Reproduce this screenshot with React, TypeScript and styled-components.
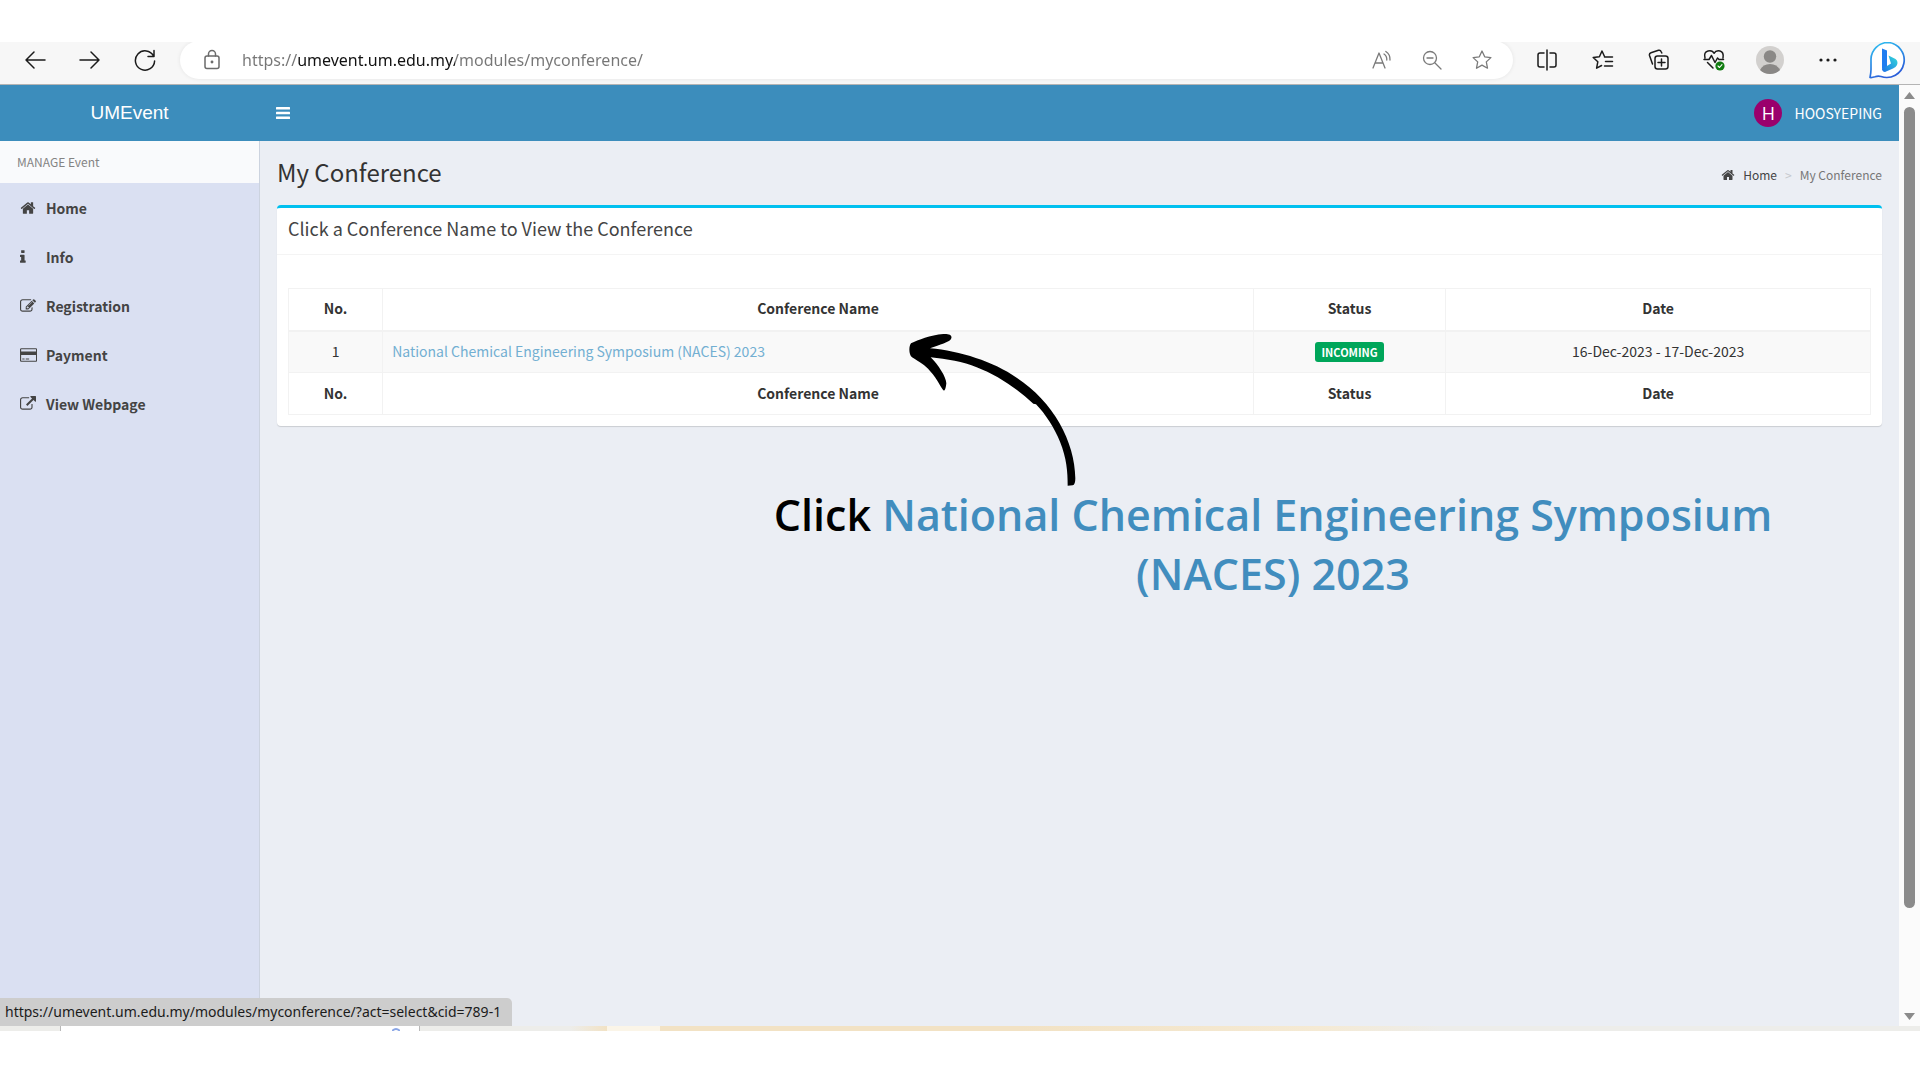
import React from "react";
import styled, { createGlobalStyle } from "styled-components";

const sans = `"Noto Sans CJK SC", "Noto Sans", sans-serif`;
const ui = `"Noto Sans", "Open Sans", sans-serif`;

const GlobalStyle = createGlobalStyle`
  * { box-sizing: border-box; }
  body { margin: 0; background: #fff; color: #333; font-family: ${sans}; font-size: 14px; line-height: 20px; }
  button { border: 0; background: none; padding: 0; font: inherit; color: inherit; cursor: pointer; }
  a { color: inherit; text-decoration: none; }
`;

const Frame = styled.div`
  min-height: 100vh;
  padding: 42px 0 49px;
  display: flex;
  flex-direction: column;
`;

/* ---------- browser bar ---------- */
const BrowserBar = styled.header`
  display: flex;
  align-items: center;
  height: 43px;
  padding: 0 1px 6px 7px;
  overflow: hidden;
  background: #f7f7f7;
  border-bottom: 1px solid #b4b4b4;
`;

const BarButton = styled.button<{ $width: number; $tone?: string }>`
  display: flex;
  align-items: center;
  justify-content: center;
  flex: none;
  width: ${(p) => p.$width}px;
  height: 36px;
  color: ${(p) => p.$tone ?? "#1b1b1b"};
`;

const AddressBar = styled.form`
  flex: 1;
  display: flex;
  align-items: center;
  height: 38px;
  margin: 0 6px 0 8px;
  padding: 0 6px 0 22px;
  border-radius: 19px;
  background: #fff;
  box-shadow: 0 0 4px rgba(0, 0, 0, 0.08);
`;

const AddressInput = styled.input`
  flex: 1;
  min-width: 0;
  margin-left: 20px;
  padding: 0;
  border: 0;
  outline: 0;
  font: 16px/24px ${ui};
  color: #767676;
  -webkit-text-fill-color: transparent;
  background: linear-gradient(to right, #767676 56px, #111 56px, #111 213px, #767676 213px);
  background-clip: text;
  -webkit-background-clip: text;
`;

/* ---------- page ---------- */
const Viewport = styled.div`
  position: relative;
  flex: 1;
  display: flex;
`;

const Page = styled.div`
  flex: 1;
  display: flex;
  flex-direction: column;
`;

const TopBar = styled.div`
  display: flex;
  align-items: center;
  height: 56px;
  background: #3c8dbc;
  color: #fff;
`;

const Brand = styled.a`
  width: 259px;
  text-align: center;
  font: 19px/56px "Liberation Sans", Arial, sans-serif;
`;

const MenuToggle = styled.button`
  display: flex;
  margin-left: 17px;
`;

const UserLink = styled.button`
  display: flex;
  align-items: center;
  gap: 12px;
  margin-left: auto;
  margin-right: 17px;
  font-size: 14px;
`;

const UserInitial = styled.span`
  width: 28px;
  height: 28px;
  border-radius: 50%;
  background: #9a006c;
  text-align: center;
  font: 18px/28px "Open Sans", sans-serif;
`;

const Columns = styled.div`
  flex: 1;
  display: flex;
`;

const Sidebar = styled.nav`
  width: 260px;
  flex: none;
  background: #dae0f2;
  border-right: 1px solid #ccd3df;
`;

const SidebarTitle = styled.div`
  height: 42px;
  padding-left: 17px;
  background: #f9fafc;
  color: #848484;
  font-size: 12px;
  line-height: 42px;
`;

const SidebarLink = styled.a`
  display: grid;
  grid-template-columns: 26px 1fr;
  align-items: center;
  height: 49px;
  padding-left: 20px;
  color: #444;
  font-weight: 700;
  font-size: 14px;
`;

const Content = styled.main`
  position: relative;
  flex: 1;
  padding: 0 17px;
  background: #ebeef4;
`;

const ContentHeader = styled.div`
  display: flex;
  align-items: center;
  justify-content: space-between;
  height: 64px;
  padding-bottom: 2px;
`;

const Title = styled.h1`
  margin: 0;
  font-size: 24px;
  font-weight: 400;
  line-height: 32px;
`;

const Crumbs = styled.ol`
  display: flex;
  align-items: center;
  gap: 8px;
  margin: 6px 0 0;
  padding: 0;
  list-style: none;
  font-size: 12px;
  color: #777;
`;

const CrumbLink = styled.a`
  display: flex;
  align-items: center;
  gap: 8px;
  color: #444;
`;

const Separator = styled.li`
  color: #c6c9ce;
`;

const Card = styled.section`
  border-top: 3px solid #00c0ef;
  border-radius: 4px;
  background: #fff;
  box-shadow: 0 1px 1px rgba(0, 0, 0, 0.14);
`;

const CardTitle = styled.h2`
  margin: 0;
  padding: 0 11px 6px;
  border-bottom: 1px solid #f4f4f4;
  color: #444;
  font-size: 18px;
  font-weight: 400;
  line-height: 40px;
`;

const CardBody = styled.div`
  padding: 33px 11px 11px;
`;

const Table = styled.table`
  width: 100%;
  table-layout: fixed;
  border-collapse: collapse;
  text-align: center;

  th, td { height: 42px; padding: 0 9px 2px; border: 1px solid #f2f2f2; line-height: 20px; }
  thead th { border-bottom-width: 2px; }
  tbody tr { background: #f9f9f9; }
`;

const Col = styled.col<{ $share: number }>`
  width: ${(p) => p.$share}%;
`;

const NameCell = styled.td`
  text-align: left;
`;

const ConferenceLink = styled.a`
  color: #72afd2;
`;

const Badge = styled.span`
  display: inline-block;
  padding: 0 6px;
  border-radius: 3px;
  background: #00a65a;
  color: #fff;
  font-size: 11px;
  font-weight: 700;
  line-height: 20px;
  vertical-align: middle;
`;

/* ---------- annotation laid over the page ---------- */
const Note = styled.div`
  position: absolute;
  top: 184px;
  left: 480px;
  width: 1066px;
`;

const NoteArrow = styled.svg`
  display: block;
  margin-left: 160px;
`;

const NoteText = styled.p`
  margin: -10px 0 0;
  color: #418dbe;
  font: 600 43px/59px "Open Sans", "Noto Sans", sans-serif;
  text-align: center;
`;

const NoteLead = styled.span`
  color: #000;
`;

/* ---------- scroll bar, status bubble, task bar edge ---------- */
const ScrollTrack = styled.div`
  display: flex;
  flex-direction: column;
  align-items: center;
  justify-content: space-between;
  width: 21px;
  padding: 6px 0;
  background: #fbfbfb;
`;

const ScrollThumb = styled.div`
  flex: 0 1 801px;
  width: 11px;
  margin: 8px 0 auto;
  border-radius: 6px;
  background: #8b8b8b;
`;

const StatusBubble = styled.div`
  position: absolute;
  left: 0;
  bottom: 0;
  height: 28px;
  padding: 0 11px 0 5px;
  border-radius: 0 5px 0 0;
  background: #cdcdcd;
  color: #1b1b1b;
  font: 14px/28px ${ui};
`;

const TaskEdge = styled.div`
  display: flex;
  height: 5px;
  overflow: hidden;
  background: #ededea;
`;

const TaskTab = styled.div`
  width: 360px;
  margin-left: 60px;
  padding-left: 331px;
  border: solid #b9b9b9;
  border-width: 0 1px;
  background: #fff;

  svg { display: block; }
`;

const TaskGlow = styled.div`
  flex: 1;
  background: linear-gradient(to right, #ededea 0 10%, #f2e2c4 12.5%, #fbf5e8 12.5% 16%, #f2e2c4 16% 40%, #f5ead4 60%, #ededea 68%);
`;

const Svg = (p: React.SVGProps<SVGSVGElement>) => (
  <svg fill="none" stroke="currentColor" strokeWidth={1.5} strokeLinecap="round" strokeLinejoin="round" aria-hidden {...p} />
);

const Glyph = ({ d, w = 1792, size = 16 }: { d: string; w?: number; size?: number }) => (
  <svg width={(size * w) / 1792} height={size} viewBox={`0 0 ${w} 1792`} fill="currentColor" aria-hidden>
    <path d={d} />
  </svg>
);

const homePath =
  "M1472 992v480q0 26-19 45t-45 19h-384v-384h-256v384h-384q-26 0-45-19t-19-45v-480q0-1 .5-3t.5-3l575-474 575 474q1 2 1 6zm223-69l-62 74q-8 9-21 11h-3q-13 0-21-7l-692-577-692 577q-12 8-24 7-13-2-21-11l-62-74q-8-10-7-23.5t11-21.5l719-599q32-26 76-26t76 26l244 204v-195q0-14 9-23t23-9h192q14 0 23 9t9 23v408l219 182q10 8 11 21.5t-7 23.5z";

const menu = [
  { label: "Home", w: 1792, d: homePath },
  {
    label: "Info",
    w: 640,
    d: "M640 1344v128q0 26-19 45t-45 19h-512q-26 0-45-19t-19-45v-128q0-26 19-45t45-19h64v-384h-64q-26 0-45-19t-19-45v-128q0-26 19-45t45-19h384q26 0 45 19t19 45v576h64q26 0 45 19t19 45zm-128-1152v192q0 26-19 45t-45 19h-256q-26 0-45-19t-19-45v-192q0-26 19-45t45-19h256q26 0 45 19t19 45z",
  },
  {
    label: "Registration",
    w: 1792,
    d: "M888 1184l116-116-152-152-116 116v56h96v96h56zm440-720q-16-16-33 1l-350 350q-17 17-1 33t33-1l350-350q17-17 1-33zm80 594v190q0 119-84.5 203.5t-203.5 84.5h-832q-119 0-203.5-84.5t-84.5-203.5v-832q0-119 84.5-203.5t203.5-84.5h832q63 0 117 25 15 7 18 23 3 17-9 29l-49 49q-14 14-32 8-23-6-45-6h-832q-66 0-113 47t-47 113v832q0 66 47 113t113 47h832q66 0 113-47t47-113v-126q0-13 9-22l64-64q15-15 35-7t20 29zm-96-738l288 288-672 672h-288v-288zm444 132l-92 92-288-288 92-92q28-28 68-28t68 28l152 152q28 28 28 68t-28 68z",
  },
  {
    label: "Payment",
    w: 1920,
    d: "M1760 128q66 0 113 47t47 113v1216q0 66-47 113t-113 47h-1600q-66 0-113-47t-47-113v-1216q0-66 47-113t113-47h1600zm-1600 128q-13 0-22.5 9.5t-9.5 22.5v224h1664v-224q0-13-9.5-22.5t-22.5-9.5h-1600zm1600 1280q13 0 22.5-9.5t9.5-22.5v-608h-1664v608q0 13 9.5 22.5t22.5 9.5h1600zm-1504-128v-128h256v128h-256zm384 0v-128h384v128h-384z",
  },
  {
    label: "View Webpage",
    w: 1792,
    d: "M1408 928v320q0 119-84.5 203.5t-203.5 84.5h-832q-119 0-203.5-84.5t-84.5-203.5v-832q0-119 84.5-203.5t203.5-84.5h704q14 0 23 9t9 23v64q0 14-9 23t-23 9h-704q-66 0-113 47t-47 113v832q0 66 47 113t113 47h832q66 0 113-47t47-113v-320q0-14 9-23t23-9h64q14 0 23 9t9 23zm384-864v512q0 26-19 45t-45 19-45-19l-176-176-652 652q-10 10-23 10t-23-10l-114-114q-10-10-10-23t10-23l652-652-176-176q-19-19-19-45t19-45 45-19h512q26 0 45 19t19 45z",
  },
];

const columns = ["No.", "Conference Name", "Status", "Date"];
const shares = [5.95, 55.05, 12.15, 26.85];

const starPath = "M11 2l2.7 5.8 6.2.8-4.6 4.3 1.2 6.3L11 16.1l-5.5 3.1 1.2-6.3L2.1 8.6l6.2-.8z";

const HeadRow = () => (
  <tr>
    {columns.map((name) => (
      <th key={name} scope="col">{name}</th>
    ))}
  </tr>
);

const Toolbar = () => (
  <BrowserBar>
    <BarButton $width={55} aria-label="Back">
      <Svg width={22} height={20} viewBox="0 0 22 20"><path d="M21 10H2M10 2l-8 8 8 8" /></Svg>
    </BarButton>
    <BarButton $width={55} aria-label="Forward">
      <Svg width={22} height={20} viewBox="0 0 22 20"><path d="M1 10h19M12 2l8 8-8 8" /></Svg>
    </BarButton>
    <BarButton $width={55} aria-label="Refresh">
      <Svg width={22} height={22} viewBox="0 0 22 22"><path d="M19.500 7A9.600 9.600 0 1 0 20.600 12M20 1.500V7.500h-6" /></Svg>
    </BarButton>
    <AddressBar>
      <Svg width={20} height={22} viewBox="0 0 20 22" color="#6b6b6b">
        <rect x="3" y="7" width="14" height="12.5" rx="2" />
        <path d="M6.5 7V5a3.5 3.5 0 0 1 7 0v2" />
        <circle cx="10" cy="13" r="0.7" fill="currentColor" />
      </Svg>
      <AddressInput aria-label="Address" defaultValue="https://umevent.um.edu.my/modules/myconference/" />
      <BarButton $width={50} $tone="#7a7a7a" type="button" aria-label="Read aloud">
        <Svg width={22} height={22} viewBox="0 0 22 22" strokeWidth={1.3}>
          <path d="M2 19L8 4l6 15M4 14h8M13 5q3 2 2.8 6M14.8 2.5q4.600 3 4.200 8.500" />
        </Svg>
      </BarButton>
      <BarButton $width={50} $tone="#7a7a7a" type="button" aria-label="Zoom out">
        <Svg width={22} height={22} viewBox="0 0 22 22" strokeWidth={1.3}>
          <circle cx="9" cy="9" r="6.500" /><path d="M6 9h6M14 14l6 6" />
        </Svg>
      </BarButton>
      <BarButton $width={50} $tone="#7a7a7a" type="button" aria-label="Add to favourites">
        <Svg width={22} height={22} viewBox="0 0 22 22" strokeWidth={1.3}><path d={starPath} /></Svg>
      </BarButton>
    </AddressBar>
    <BarButton $width={56} aria-label="Split screen">
      <Svg width={22} height={22} viewBox="0 0 22 22">
        <path d="M8 4H4a2 2 0 0 0-2 2v10a2 2 0 0 0 2 2h4M14 4h4a2 2 0 0 1 2 2v10a2 2 0 0 1-2 2h-4M11 1v20" />
      </Svg>
    </BarButton>
    <BarButton $width={56} aria-label="Favourites">
      <Svg width={22} height={22} viewBox="0 0 22 22">
        <path d="M12.500 7.500L10 2 7.400 7.700l-6.200.8 4.600 4.300-1.200 6.400 5-2.700M12.500 8h8M13.500 12.500h7M12.500 17h8" />
      </Svg>
    </BarButton>
    <BarButton $width={55} aria-label="Collections">
      <Svg width={22} height={22} viewBox="0 0 22 22">
        <rect x="7" y="7" width="13" height="13" rx="2.500" />
        <path d="M13.500 10v7M10 13.500h7M4.500 15L1.500 6.500q-.5-2 1.500-2.700l7.500-2.500q2-.5 2.700 1.400L13.800 4" />
      </Svg>
    </BarButton>
    <BarButton $width={55} aria-label="Browser essentials">
      <Svg width={22} height={22} viewBox="0 0 22 22">
        <path d="M2 9Q.5 3 5 2t6 2.300Q13 1 17 2t3 7M1 10.500h5l2.500-4 3.500 7 2.500-4.500 1.500 1.500h4.500M4.500 13.500l5.500 5.500" />
        <circle cx="17" cy="17" r="4.600" fill="#107c10" stroke="none" />
        <path d="M15 17l1.500 1.500 2.500-2.800" stroke="#fff" strokeWidth={1.100} />
      </Svg>
    </BarButton>
    <BarButton $width={58} aria-label="Profile">
      <Svg width={28} height={28} viewBox="0 0 28 28" stroke="none">
        <circle cx="14" cy="14" r="14" fill="#d2d0ce" />
        <circle cx="14" cy="10.500" r="6.200" fill="#8a8886" />
        <path d="M4 24q3-6 10-6t10 6q-4 4-10 4t-10-4z" fill="#8a8886" />
      </Svg>
    </BarButton>
    <BarButton $width={58} aria-label="More">
      <Svg width={18} height={4} viewBox="0 0 18 4" fill="currentColor" stroke="none">
        <circle cx="2" cy="2" r="1.600" /><circle cx="9" cy="2" r="1.600" /><circle cx="16" cy="2" r="1.600" />
      </Svg>
    </BarButton>
    <BarButton $width={62} aria-label="Bing chat">
      <Svg width={38} height={38} viewBox="0 0 38 38">
        <defs>
          <linearGradient id="rim" x1="0" y1="0" x2="0.400" y2="1">
            <stop offset="0" stopColor="#2fc4f2" /><stop offset="1" stopColor="#2b5fd9" />
          </linearGradient>
          <linearGradient id="bowl" x1="1" y1="0" x2="0" y2="1">
            <stop offset="0" stopColor="#35dcd8" /><stop offset="1" stopColor="#1b6fe8" />
          </linearGradient>
        </defs>
        <path d="M19 1.500a17.500 17.500 0 1 1-7 34q-3-1-6 .3-3 1-5 .7 1-5 1-8V18A17 17 0 0 1 19 1.500z" fill="#fff" stroke="url(#rim)" strokeWidth={1.700} />
        <path d="M13 7.500l5 2v17l-3.500 3.500q-1.500-1-1.500-3z" fill="#1f7df0" stroke="none" />
        <path d="M19.500 14.500l7 3.500q3 2.500 1.500 6-1 2-4 3.500L16 31q-2.500 0-3-3l9-5.500z" fill="url(#bowl)" stroke="none" />
      </Svg>
    </BarButton>
  </BrowserBar>
);

export default function App() {
  return (
    <Frame>
      <GlobalStyle />
      <Toolbar />
      <Viewport>
        <Page>
          <TopBar>
            <Brand href="#">UMEvent</Brand>
            <MenuToggle aria-label="Toggle navigation">
              <svg width="14" height="12" viewBox="0 0 14 12" fill="currentColor" aria-hidden>
                <rect width="14" height="2.500" rx="0.500" /><rect y="4.700" width="14" height="2.500" rx="0.500" /><rect y="9.400" width="14" height="2.500" rx="0.500" />
              </svg>
            </MenuToggle>
            <UserLink>
              <UserInitial>H</UserInitial>
              HOOSYEPING
            </UserLink>
          </TopBar>
          <Columns>
            <Sidebar>
              <SidebarTitle>MANAGE Event</SidebarTitle>
              {menu.map((item) => (
                <SidebarLink key={item.label} href="#">
                  <Glyph d={item.d} w={item.w} />
                  {item.label}
                </SidebarLink>
              ))}
            </Sidebar>
            <Content>
              <ContentHeader>
                <Title>My Conference</Title>
                <Crumbs>
                  <li><CrumbLink href="#"><Glyph d={homePath} size={14} />Home</CrumbLink></li>
                  <Separator>&gt;</Separator>
                  <li>My Conference</li>
                </Crumbs>
              </ContentHeader>
              <Card>
                <CardTitle>Click a Conference Name to View the Conference</CardTitle>
                <CardBody>
                  <Table>
                    <colgroup>{shares.map((s) => <Col key={s} $share={s} />)}</colgroup>
                    <thead><HeadRow /></thead>
                    <tbody>
                      <tr>
                        <td>1</td>
                        <NameCell>
                          <ConferenceLink href="#">National Chemical Engineering Symposium (NACES) 2023</ConferenceLink>
                        </NameCell>
                        <td><Badge>INCOMING</Badge></td>
                        <td>16-Dec-2023 - 17-Dec-2023</td>
                      </tr>
                    </tbody>
                    <tfoot><HeadRow /></tfoot>
                  </Table>
                </CardBody>
              </Card>
              <Note>
                <NoteArrow width="190" height="170" viewBox="0 0 570 510" aria-hidden>
                  <path d="M33 55C55 45 90 30 130 27C150 26 158 32 153 42C148 52 120 58 90 70C180 78 280 110 350 158C460 230 525 350 526 460Q526 480 518 481L503 482C503 440 500 400 480 350C465 312 435 265 408 238L400 236C350 190 290 150 230 127C190 110 140 102 92 97C115 120 138 155 139 175C138 185 136 196 132 197C122 190 115 165 90 138C75 120 60 112 36 97C26 88 26 65 33 55Z" />
                </NoteArrow>
                <NoteText><NoteLead>Click</NoteLead> National Chemical Engineering Symposium (NACES) 2023</NoteText>
              </Note>
            </Content>
          </Columns>
        </Page>
        <ScrollTrack>
          <svg width="11" height="8" viewBox="0 0 11 8" fill="#8b8b8b" aria-hidden><path d="M5.500 1l5.500 7H0z" /></svg>
          <ScrollThumb />
          <svg width="11" height="8" viewBox="0 0 11 8" fill="#8b8b8b" aria-hidden><path d="M5.500 8L0 1h11z" /></svg>
        </ScrollTrack>
        <StatusBubble>https://umevent.um.edu.my/modules/myconference/?act=select&amp;cid=789-1</StatusBubble>
      </Viewport>
      <TaskEdge>
        <TaskTab>
          <svg width="8" height="5" viewBox="0 0 8 5" fill="none" stroke="#8aa6e6" strokeWidth="2" aria-hidden><path d="M0 5q4-4 8 0" /></svg>
        </TaskTab>
        <TaskGlow />
      </TaskEdge>
    </Frame>
  );
}
